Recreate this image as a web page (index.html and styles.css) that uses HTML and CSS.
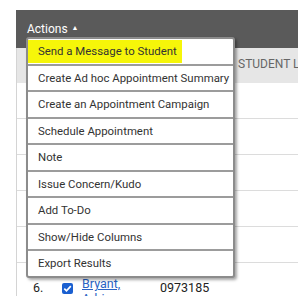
FILE: index.html
```html
<!DOCTYPE html>
<html lang="en">
<head>
    <meta charset="UTF-8">
    <meta name="viewport" content="width=device-width, initial-scale=1.0">
    <title>Student List</title>
    <link rel="stylesheet" href="styles.css">
</head>
<body>
    <div class="page">
        <div class="toolbar">
            <button class="actions-btn">Actions <span class="caret">&#9650;</span></button>
            <ul class="menu">
                <li class="menu-item highlighted"><span class="marker">Send a Message to Student</span></li>
                <li class="menu-item">Create Ad hoc Appointment Summary</li>
                <li class="menu-item">Create an Appointment Campaign</li>
                <li class="menu-item">Schedule Appointment</li>
                <li class="menu-item">Note</li>
                <li class="menu-item">Issue Concern/Kudo</li>
                <li class="menu-item">Add To-Do</li>
                <li class="menu-item">Show/Hide Columns</li>
                <li class="menu-item">Export Results</li>
            </ul>
        </div>
        <div class="table">
            <div class="row head">
                <div class="cell num"></div>
                <div class="cell check"></div>
                <div class="cell name"></div>
                <div class="cell id"></div>
                <div class="cell list">STUDENT LIST</div>
            </div>
            <div class="row"></div>
            <div class="row"></div>
            <div class="row"></div>
            <div class="row"></div>
            <div class="row"></div>
            <div class="row last">
                <div class="cell num">6.</div>
                <div class="cell check">
                    <svg width="11" height="11" viewBox="0 0 11 11">
                        <rect width="11" height="11" rx="2" fill="#1a5fd0"/>
                        <path d="M2.3 5.6 L4.5 7.8 L8.8 3.2" fill="none" stroke="#fff" stroke-width="1.7"/>
                    </svg>
                </div>
                <div class="cell name"><a href="#">Bryant,<br>Adrianna</a></div>
                <div class="cell id">0973185</div>
            </div>
        </div>
    </div>
</body>
</html>
```

FILE: styles.css
```css
body {
    margin: 0;
    font-family: Roboto, 'Liberation Sans', sans-serif;
    background: #fff;
    color: #333;
    overflow: hidden;
}
.page {
    padding: 10px 0 0 16px;
}
.toolbar {
    position: relative;
    height: 38px;
    background: #5a5a5a;
}
.actions-btn {
    border: none;
    background: none;
    color: #fff;
    font-family: inherit;
    font-size: 12px;
    padding: 12px 0 0 11px;
    cursor: pointer;
}
.caret {
    font-size: 7px;
    margin-left: 1px;
    vertical-align: 3px;
}
.menu {
    position: absolute;
    left: 10px;
    top: 27px;
    z-index: 2;
    width: 205px;
    margin: 0;
    padding: 0;
    list-style: none;
    background: #fff;
    border: 2px solid #8c8c8c;
    border-radius: 3px;
    box-shadow: 2px 2px 3px rgba(0, 0, 0, 0.35);
}
.menu-item {
    height: 24.5px;
    line-height: 24.5px;
    padding-left: 10px;
    font-size: 11.4px;
    color: #333;
    border-top: 2px solid #9c9c9c;
    white-space: nowrap;
}
.menu-item:first-child {
    border-top: none;
}
.menu-item.highlighted {
    padding-left: 0;
}
.marker {
    display: inline-block;
    height: 23px;
    margin-top: 1px;
    line-height: 23px;
    padding: 0 5px 0 10px;
    background: #f6f609;
}
.table {
    border-left: 1px solid #d4d4d4;
}
.row {
    display: flex;
    height: 35px;
    overflow: hidden;
    border-bottom: 1px solid #dcdcdc;
}
.row.head {
    height: 35px;
    background: #e6e6e6;
    border-bottom: none;
}
.cell {
    flex-shrink: 0;
    font-size: 12.5px;
    white-space: nowrap;
}
.num {
    width: 45px;
    padding-left: 16px;
    box-sizing: border-box;
    padding-top: 10px;
}
.check {
    width: 20px;
    padding-top: 10px;
}
.name {
    width: 78px;
}
.id {
    width: 78px;
    padding-top: 10px;
}
.head .list {
    padding-top: 9px;
    color: #666;
    font-size: 12px;
}
.row.last {
    height: 40px;
    border-bottom: none;
}
.last .num,
.last .id {
    padding-top: 17px;
    color: #222;
}
.last .check {
    padding-top: 19px;
}
.last .name {
    padding-top: 13px;
    line-height: 15px;
}
.last .name a {
    color: #2b63c4;
    text-decoration: underline;
}
```
